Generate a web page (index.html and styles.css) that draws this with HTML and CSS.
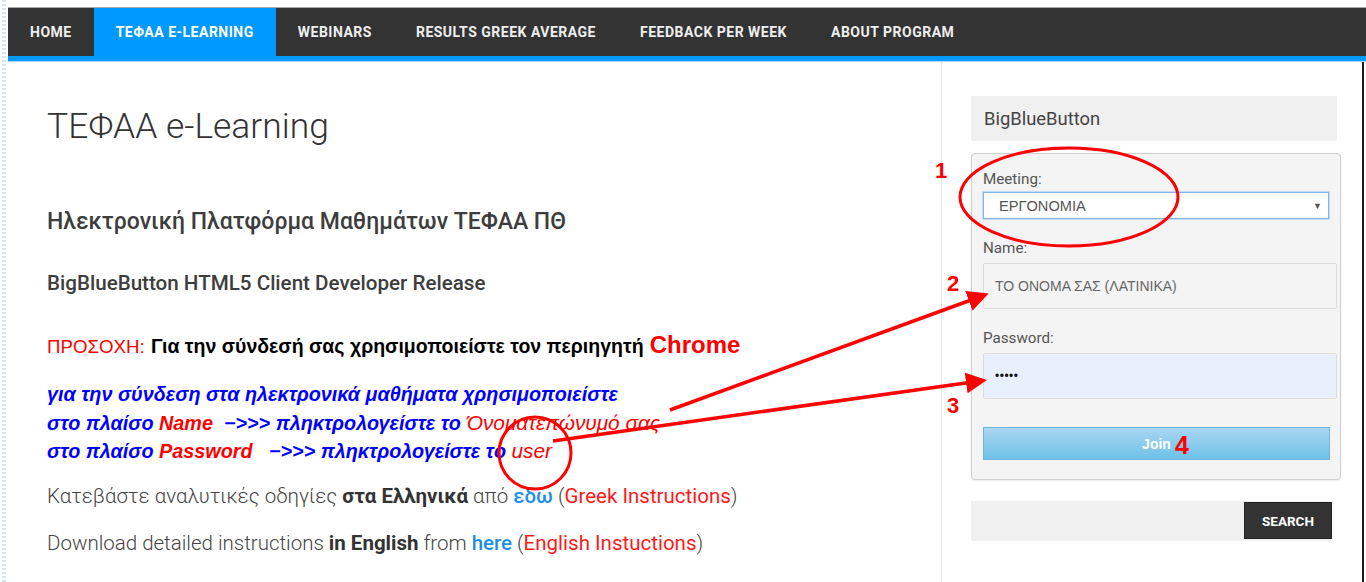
FILE: index.html
```html
<!DOCTYPE html>
<html lang="el">
<head>
<meta charset="utf-8">
<title>ΤΕΦΑΑ e-Learning</title>
<link rel="stylesheet" href="styles.css">
</head>
<body>
<div class="frame">
  <div class="edge"></div>
  <div class="page">
    <nav class="topnav">
      <a class="nav-item">HOME</a>
      <a class="nav-item active">ΤΕΦΑΑ E-LEARNING</a>
      <a class="nav-item">WEBINARS</a>
      <a class="nav-item">RESULTS GREEK AVERAGE</a>
      <a class="nav-item">FEEDBACK PER WEEK</a>
      <a class="nav-item">ABOUT PROGRAM</a>
    </nav>
    <div class="navline"></div>
    <div class="content">
      <main class="main">
        <h1 class="title">ΤΕΦΑΑ e-Learning</h1>
        <h3 class="sub">Ηλεκτρονική Πλατφόρμα Μαθημάτων ΤΕΦΑΑ ΠΘ</h3>
        <h4 class="sub2">BigBlueButton HTML5 Client Developer Release</h4>
        <p class="warn"><span class="red">ΠΡΟΣΟΧΗ:</span> <b>Για την σύνδεσή σας χρησιμοποιείστε τον περιηγητή</b> <b class="chrome">Chrome</b></p>
        <p class="howto">για την σύνδεση στα ηλεκτρονικά μαθήματα χρησιμοποιείστε<br>
        στο πλαίσο <span class="red">Name</span>&nbsp; −&gt;&gt;&gt; πληκτρολογείστε το <span class="red thin">Όνοματεπώνυμό σας</span><br>
        στο πλαίσο <span class="red">Password</span> &nbsp; −&gt;&gt;&gt; πληκτρολογείστε το <span class="red thin">user</span></p>
        <p class="dl first">Κατεβάστε αναλυτικές οδηγίες <strong>στα Ελληνικά</strong> από <a class="link">εδω</a> (<span class="redlink">Greek Instructions</span>)</p>
        <p class="dl">Download detailed instructions <strong>in English</strong> from <a class="link">here</a> (<span class="redlink">English Instuctions</span>)</p>
      </main>
      <aside class="sidebar">
        <div class="widget-title">BigBlueButton</div>
        <form class="bbb">
          <label class="lbl">Meeting:</label>
          <div class="select"><span>ΕΡΓΟΝΟΜΙΑ</span><span class="caret">▼</span></div>
          <label class="lbl lbl-gap">Name:</label>
          <div class="field">ΤΟ ΟΝΟΜΑ ΣΑΣ (ΛΑΤΙΝΙΚΑ)</div>
          <label class="lbl lbl-gap">Password:</label>
          <div class="field pw">•••••</div>
          <div class="join">Join</div>
        </form>
        <div class="search">
          <div class="search-input"></div>
          <div class="search-btn">SEARCH</div>
        </div>
      </aside>
    </div>
  </div>
</div>
<svg class="annot" width="1366" height="582" viewBox="0 0 1366 582">
  <defs>
    <marker id="ah" markerWidth="6" markerHeight="6" refX="4" refY="3" orient="auto" markerUnits="strokeWidth">
      <path d="M0,0 L6,3 L0,6 Z" fill="#ff0000"/>
    </marker>
  </defs>
  <ellipse cx="1069" cy="197" rx="109" ry="49" fill="none" stroke="#ff0000" stroke-width="3"/>
  <circle cx="535" cy="453" r="36" fill="none" stroke="#ff0000" stroke-width="3"/>
  <line x1="670" y1="410" x2="982" y2="296" stroke="#ff0000" stroke-width="3.5" marker-end="url(#ah)"/>
  <line x1="553" y1="441" x2="980" y2="381" stroke="#ff0000" stroke-width="3.5" marker-end="url(#ah)"/>
  <text x="935" y="178" class="num">1</text>
  <text x="947" y="291" class="num">2</text>
  <text x="947" y="413" class="num">3</text>
  <text x="1175" y="454" class="num big">4</text>
</svg>
</body>
</html>
```

FILE: styles.css
```css
* { box-sizing: border-box; }
html, body { margin: 0; padding: 0; }
body {
  width: 1366px;
  height: 582px;
  overflow: hidden;
  background: #fff;
  font-family: Roboto, "Noto Sans", sans-serif;
  position: relative;
}
.frame {
  display: flex;
  height: 582px;
}
.edge {
  width: 8px;
  flex: none;
  background:
    repeating-linear-gradient(to bottom, #d6e4ee 0 2px, #ffffff 2px 4px) 2px 0 / 4px 100% no-repeat,
    #fff;
}
.page {
  flex: 1;
  display: flex;
  flex-direction: column;
  padding-top: 7px;
}
.topnav {
  display: flex;
  background: #333333;
  height: 49px;
  border-top: 1px solid #a6a6a6;
  align-items: stretch;
}
.nav-item {
  display: flex;
  align-items: center;
  padding: 0 22px;
  color: #eeeeee;
  font-size: 14px;
  font-weight: 700;
  letter-spacing: 0.5px;
  text-decoration: none;
}
.nav-item.active {
  background: #0099ff;
  color: #ffffff;
}
.navline {
  height: 6px;
  background: #0099ff;
  border-bottom: 1px solid #a8d8ff;
}
.content {
  flex: 1;
  display: flex;
  border-right: 2px solid #1a1a1a;
  margin-right: 2px;
}
.main {
  width: 933px;
  flex: none;
  padding: 44px 0 0 39px;
  color: #444;
}
.title {
  margin: 0;
  font-size: 35.4px;
  line-height: 40px;
  font-weight: 300;
  color: #333;
}
.sub {
  margin: 63px 0 0;
  font-size: 23px;
  line-height: 26px;
  font-weight: 500;
  color: #3d3d3d;
}
.sub2 {
  margin: 35px 0 0;
  font-size: 20.6px;
  line-height: 26px;
  font-weight: 500;
  color: #3d3d3d;
}
.warn {
  margin: 33px 0 0;
  font-family: "Liberation Sans", Arial, sans-serif;
  font-size: 18.7px;
  line-height: 32px;
  color: #000;
  word-spacing: 1px;
}
.warn b { font-weight: 700; font-size: 19.5px; word-spacing: 0; }
.red { color: #ff0000; }
.warn .chrome { font-size: 24px; color: #ff0000; }
.howto {
  margin: 17px 0 0;
  font-family: "Liberation Sans", Arial, sans-serif;
  font-size: 19.8px;
  line-height: 28.5px;
  font-style: italic;
  font-weight: 700;
  color: #0000ff;
}
.howto .thin { font-weight: 400; font-size: 20.8px; }
.dl {
  margin: 19px 0 0;
  font-size: 20.5px;
  line-height: 28px;
  font-weight: 300;
  color: #444;
}
.dl.first { margin-top: 16px; }
.dl strong { font-weight: 700; color: #333; }
.link { color: #1e8fe6; font-weight: 500; text-decoration: none; }
.redlink { color: #ff1a1a; font-weight: 400; }

.sidebar {
  flex: 1;
  border-left: 1px solid #e6e6e6;
  padding: 34px 0 0 29px;
}
.widget-title {
  width: 366px;
  height: 45px;
  background: #f0f0f0;
  padding-left: 13px;
  display: flex;
  align-items: center;
  font-size: 18.4px;
  color: #444;
}
.bbb {
  margin: 12px 0 0;
  width: 370px;
  border: 1px solid #cfcfcf;
  border-radius: 4px;
  background: #f4f4f4;
  box-shadow: 0 1px 2px rgba(0,0,0,0.08);
  padding: 15px 3px 19px 11px;
  display: flex;
  flex-direction: column;
  align-items: flex-start;
}
.lbl {
  font-size: 15.2px;
  line-height: 20px;
  color: #555;
}
.lbl-gap { margin-top: 19px; }
.select {
  margin-top: 3px;
  width: 346px;
  height: 27px;
  background: #fff;
  border: 1px solid #86b3ea;
  box-shadow: 0 0 0 1px #c5dcf7;
  display: flex;
  align-items: center;
  justify-content: space-between;
  padding: 0 6px 0 15px;
  font-family: "Liberation Sans", Arial, sans-serif;
  font-size: 14.6px;
  color: #555;
}
.caret { font-size: 9px; color: #555; }
.field {
  margin-top: 5px;
  width: 354px;
  height: 46px;
  background: #f4f4f4;
  border: 1px solid #dcdcdc;
  border-radius: 2px;
  display: flex;
  align-items: center;
  padding-left: 11px;
  font-family: "Liberation Sans", Arial, sans-serif;
  font-size: 14px;
  color: #666;
}
.field.pw {
  background: #e8f0fe;
  color: #111;
  font-size: 12px;
  letter-spacing: 0.5px;
}
.join {
  margin-top: 28px;
  width: 347px;
  height: 33px;
  background: linear-gradient(#a9d7f1, #6ec0e8);
  border: 1px solid #6fb4e0;
  display: flex;
  align-items: center;
  justify-content: center;
  font-family: "Liberation Sans", Arial, sans-serif;
  font-size: 14px;
  font-weight: 700;
  color: #fff;
}
.search {
  margin-top: 21px;
  display: flex;
  width: 361px;
  height: 40px;
  background: #f0f0f0;
}
.search-input { flex: 1; }
.search-btn {
  width: 88px;
  margin: 1px 0 2px;
  background: #333;
  border: 1px solid #222;
  color: #fff;
  display: flex;
  align-items: center;
  justify-content: center;
  font-family: Roboto, sans-serif;
  font-weight: 700;
  font-size: 13.5px;
}
.annot {
  position: absolute;
  left: 0;
  top: 0;
  pointer-events: none;
}
.num {
  font-family: "Liberation Sans", Arial, sans-serif;
  font-weight: 700;
  font-size: 22px;
  fill: #ff0000;
}
.num.big { font-size: 25px; }
```
